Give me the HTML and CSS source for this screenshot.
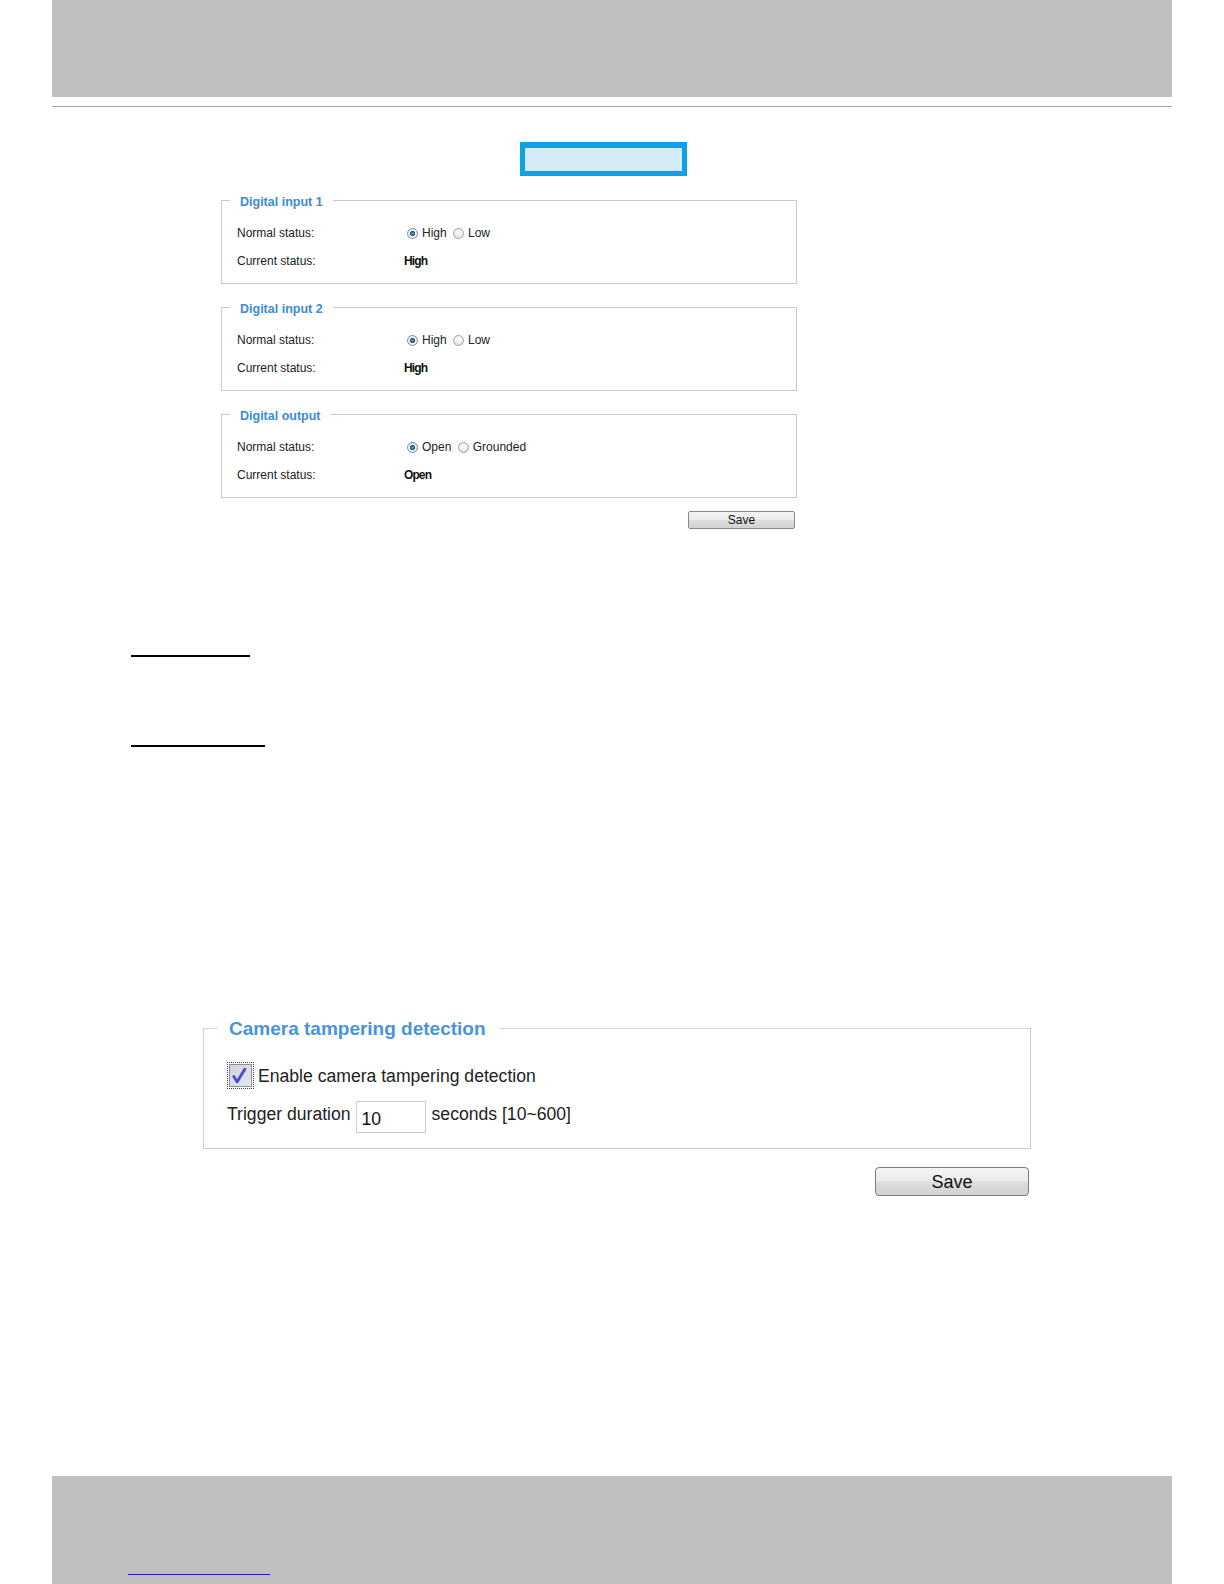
FILE: index.html
```html
<!DOCTYPE html>
<html lang="en">
<head>
<meta charset="utf-8">
<title>Digital input / output</title>
<link rel="stylesheet" href="styles.css">
</head>
<body>
<header class="page-head"></header>
<div class="head-rule"></div>
<div class="tab-box"></div>

<section class="io-panel">
  <fieldset class="io-set">
    <legend class="io-legend">Digital input 1</legend>
    <div class="io-row">
      <span class="io-label">Normal status:</span>
      <span class="io-value"><span class="radio radio-on"></span>High <span class="radio"></span>Low</span>
    </div>
    <div class="io-row">
      <span class="io-label">Current status:</span>
      <span class="io-value io-strong">High</span>
    </div>
  </fieldset>

  <fieldset class="io-set">
    <legend class="io-legend">Digital input 2</legend>
    <div class="io-row">
      <span class="io-label">Normal status:</span>
      <span class="io-value"><span class="radio radio-on"></span>High <span class="radio"></span>Low</span>
    </div>
    <div class="io-row">
      <span class="io-label">Current status:</span>
      <span class="io-value io-strong">High</span>
    </div>
  </fieldset>

  <fieldset class="io-set">
    <legend class="io-legend">Digital output</legend>
    <div class="io-row">
      <span class="io-label">Normal status:</span>
      <span class="io-value"><span class="radio radio-on"></span>Open <span class="radio"></span>Grounded</span>
    </div>
    <div class="io-row">
      <span class="io-label">Current status:</span>
      <span class="io-value io-strong">Open</span>
    </div>
  </fieldset>

  <div class="btn-row">
    <button class="btn btn-sm" type="button">Save</button>
  </div>
</section>

<div class="under-rule under-rule-a"></div>
<div class="under-rule under-rule-b"></div>

<section class="tamper-panel">
  <fieldset class="tamper-set">
    <legend class="tamper-legend">Camera tampering detection</legend>
    <div class="tamper-check-row">
      <span class="check-focus"><span class="check-box"><svg class="check-mark" viewBox="0 0 22 22" width="22" height="22"><path d="M4 11.5 L7.5 17 L15.5 4" fill="none" stroke="#4b4bcc" stroke-width="3" stroke-linecap="round" stroke-linejoin="round"/></svg></span></span>
      <span class="tamper-text">Enable camera tampering detection</span>
    </div>
    <div class="tamper-dur-row">
      <span class="tamper-text dur-text">Trigger duration</span>
      <input class="num-input" type="text" value="10">
      <span class="tamper-text dur-text">seconds [10~600]</span>
    </div>
  </fieldset>
  <div class="btn-row btn-row-lg">
    <button class="btn btn-lg" type="button">Save</button>
  </div>
</section>

<footer class="page-foot">
  <div class="foot-link"></div>
</footer>
</body>
</html>
```

FILE: styles.css
```css
html {
  overflow: hidden;
}

body {
  margin: 0;
  background: #ffffff;
  font-family: "Liberation Sans", Arial, sans-serif;
  color: #222222;
}

.page-head {
  height: 97px;
  margin: 0 52px;
  background: #c0c0c0;
}

.head-rule {
  height: 1px;
  margin: 9px 52px 0;
  background: #a4a4a4;
}

.tab-box {
  box-sizing: border-box;
  width: 167px;
  height: 34px;
  margin: 35px 0 0 520px;
  border: 5px solid #0ba2e6;
  border-top-width: 6px;
  background: #d3ecfa;
}

/* ---------- digital I/O panel ---------- */

.io-panel {
  width: 576px;
  margin: 14px 0 0 221px;
}

.io-set {
  margin: 0 0 13px;
  padding: 8px 15px 8px;
  border: 1px solid #c9c9c9;
  min-inline-size: 0;
}

.io-legend {
  margin-left: -7px;
  padding: 4px 10px 0;
  font-size: 12.5px;
  line-height: 17px;
  font-weight: bold;
  color: #3d8bd2;
}

.io-row {
  display: grid;
  grid-template-columns: 167px 1fr;
  align-items: center;
  height: 28px;
  font-size: 12px;
}

.io-value {
  display: flex;
  align-items: center;
  white-space: pre;
}

.io-strong {
  font-size: 12px;
  font-weight: bold;
  letter-spacing: -0.9px;
  color: #111111;
}

.radio {
  box-sizing: border-box;
  display: inline-block;
  width: 11px;
  height: 11px;
  margin: 0 4px 0 3px;
  border: 1px solid #a3a3a3;
  border-radius: 50%;
  background: radial-gradient(circle at 50% 35%, #ffffff 0%, #ececec 55%, #d2d2d2 100%);
}

.radio-on {
  border-color: #8a8a8a;
  background: radial-gradient(circle at 50% 50%, #6fa7c8 0%, #1f5f86 30%, #245f82 38%, #f4f4f4 46%, #e2e2e2 80%, #cfcfcf 100%);
}

.btn-row {
  display: flex;
  justify-content: flex-end;
  padding-right: 2px;
}

.io-panel .btn-row {
  margin-top: 0;
}

.btn {
  font-family: "Liberation Sans", Arial, sans-serif;
  color: #111111;
  border: 1px solid #8a8a8a;
  background: linear-gradient(#f4f4f4 0%, #ececec 48%, #dedede 52%, #d2d2d2 100%);
  padding: 0;
}

.btn-sm {
  width: 107px;
  height: 18px;
  font-size: 12px;
  line-height: 16px;
  border-radius: 2px;
}

/* ---------- underlined headings ---------- */

.under-rule {
  height: 2px;
  background: #000000;
}

.under-rule-a {
  width: 119px;
  margin: 126px 0 0 131px;
}

.under-rule-b {
  width: 134px;
  margin: 88px 0 0 131px;
}

/* ---------- tampering panel ---------- */

.tamper-panel {
  width: 828px;
  margin: 270px 0 0 203px;
}

.tamper-set {
  margin: 0;
  padding: 0 23px 15px;
  border: 1px solid #cdcdcd;
  border-top-color: #d4d4d4;
  min-inline-size: 0;
}

.tamper-legend {
  margin-left: -10px;
  padding: 0 13px 0 12px;
  font-size: 19px;
  line-height: 23px;
  font-weight: bold;
  color: #4894db;
}

.tamper-check-row {
  display: flex;
  align-items: center;
  height: 27px;
  margin-top: 22px;
}

.check-focus {
  display: flex;
  padding: 1px;
  border: 1px dotted #444444;
  margin-right: 4px;
}

.check-box {
  box-sizing: border-box;
  display: flex;
  width: 23px;
  height: 23px;
  border: 1px solid #8f8f99;
  background: linear-gradient(135deg, #d2d2de 0%, #dcdce6 50%, #e6e6ee 100%);
}

.check-mark {
  display: block;
}

.tamper-text {
  font-size: 17.6px;
  line-height: 22px;
  color: #222222;
}

.tamper-dur-row {
  display: flex;
  align-items: flex-start;
  margin-top: 12px;
}

.dur-text {
  padding-top: 2px;
}

.num-input {
  box-sizing: border-box;
  width: 70px;
  height: 32px;
  margin: 0 6px 0 5px;
  padding: 4px 0 0 5px;
  border: 1px solid #cccccc;
  font-family: "Liberation Sans", Arial, sans-serif;
  font-size: 17.6px;
  color: #111111;
  background: #ffffff;
}

.btn-row-lg {
  margin-top: 18px;
}

.btn-lg {
  width: 154px;
  height: 29px;
  font-size: 18px;
  line-height: 26px;
  border-radius: 4px;
  border-color: #7c7c7c;
}

/* ---------- footer ---------- */

.page-foot {
  height: 108px;
  margin: 280px 52px 0;
  background: #c0c0c0;
  overflow: hidden;
}

.foot-link {
  width: 142px;
  height: 1px;
  margin: 98px 0 0 76px;
  background: #1c1cc8;
}
```
